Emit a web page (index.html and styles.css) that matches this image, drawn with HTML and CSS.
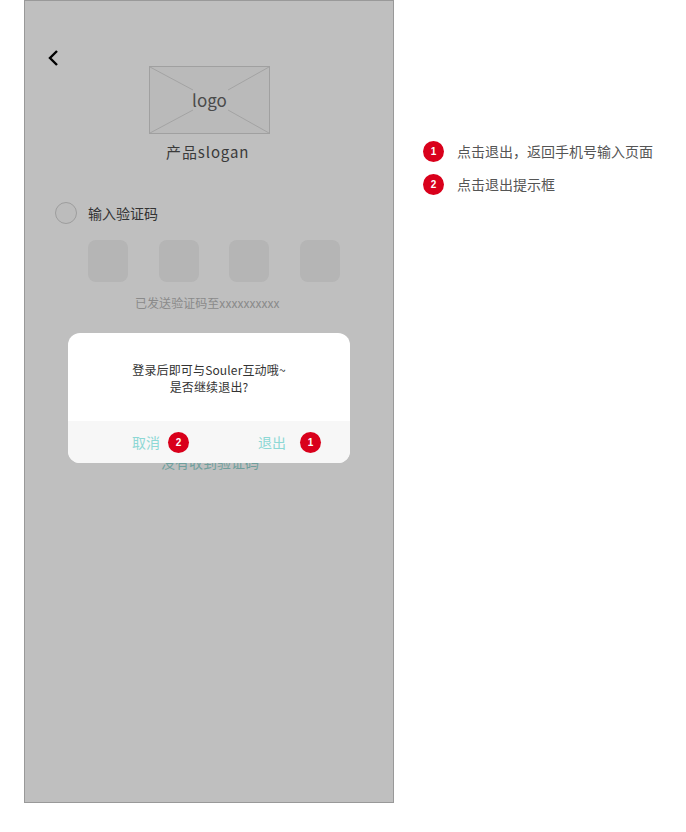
FILE: index.html
```html
<!DOCTYPE html>
<html lang="zh">
<head>
<meta charset="utf-8">
<title>退出提示</title>
<link rel="stylesheet" href="styles.css">
</head>
<body>
<div class="page">
  <main class="phone">
    <svg class="back" width="12" height="18" viewBox="0 0 12 18"><path d="M10 2 L3 9 L10 16" fill="none" stroke="#000" stroke-width="2.4"/></svg>
    <div class="logo">
      <svg class="logo-lines" width="119" height="66" viewBox="0 0 119 66"><path d="M0 0 L43 23 M119 0 L78 23 M0 66 L43 43 M119 66 L78 43" stroke="#a3a3a3" stroke-width="1" fill="none"/></svg>
      <span class="logo-text">logo</span>
    </div>
    <div class="slogan">产品slogan</div>
    <div class="code-title">
      <span class="radio"></span>
      <span>输入验证码</span>
    </div>
    <div class="code-boxes">
      <span class="code-box"></span>
      <span class="code-box"></span>
      <span class="code-box"></span>
      <span class="code-box"></span>
    </div>
    <div class="sent">已发送验证码至xxxxxxxxxx</div>
    <div class="resend">没有收到验证码</div>
    <section class="dialog">
      <div class="dialog-text">登录后即可与Souler互动哦~<br>是否继续退出?</div>
      <div class="dialog-actions">
        <div class="action action-cancel"><span>取消</span><span class="badge">2</span></div>
        <div class="action action-exit"><span>退出</span><span class="badge">1</span></div>
      </div>
    </section>
  </main>
  <aside class="notes">
    <div class="note"><span class="badge">1</span><span>点击退出，返回手机号输入页面</span></div>
    <div class="note"><span class="badge">2</span><span>点击退出提示框</span></div>
  </aside>
</div>
</body>
</html>
```
FILE: styles.css
```css
* { box-sizing: border-box; }
html, body { margin: 0; padding: 0; background: #fff; }
body {
  font-family: "Noto Sans CJK SC", "Open Sans", "Noto Sans", sans-serif;
  color: #3a3a3a;
  height: 832px;
  overflow: hidden;
}
.page {
  display: flex;
  align-items: flex-start;
  padding-left: 24px;
}
.phone {
  position: relative;
  width: 370px;
  height: 803px;
  background: #bfbfbf;
  border: 1px solid #999;
  padding-top: 48px;
  flex: none;
}
.back { display: block; margin-left: 22px; }
.logo {
  position: relative;
  width: 121px;
  height: 68px;
  margin-top: -1px;
  margin-left: 124px;
  background: #bababa;
  border: 1px solid #a0a0a0;
  display: flex;
  align-items: center;
  justify-content: center;
}
.logo-lines { position: absolute; left: 0; top: 0; }
.logo-text { position: relative; font-size: 17px; line-height: 20px; color: #4a4a4a; }
.slogan {
  margin-top: 7px;
  margin-left: 141px;
  font-size: 15px;
  line-height: 22px;
  letter-spacing: 0.9px;
  color: #3a3a3a;
}
.code-title {
  display: flex;
  align-items: center;
  gap: 11px;
  margin-top: 39px;
  margin-left: 30px;
  font-size: 14px;
  line-height: 22px;
  color: #333;
}
.radio {
  width: 22px;
  height: 22px;
  border: 1px solid #9d9d9d;
  border-radius: 50%;
  background: #bcbcbc;
}
.code-boxes {
  display: flex;
  gap: 30.67px;
  margin-top: 16px;
  margin-left: 63px;
}
.code-box {
  width: 40px;
  height: 42px;
  border-radius: 8px;
  background: #b5b5b5;
}
.sent {
  margin-top: 12px;
  margin-left: 110px;
  font-size: 12px;
  line-height: 18px;
  letter-spacing: 0.05px;
  color: #8a8a8a;
}
.resend {
  margin-top: 140px;
  margin-left: 136px;
  font-size: 14px;
  line-height: 20px;
  color: #6f9f9d;
}
.dialog {
  position: absolute;
  left: 43px;
  top: 332px;
  width: 282px;
  height: 130px;
  border-radius: 12px;
  background: #fff;
  overflow: hidden;
  display: flex;
  flex-direction: column;
}
.dialog-text {
  flex: 1;
  padding-top: 28px;
  font-size: 12px;
  line-height: 17px;
  letter-spacing: 0.15px;
  text-align: center;
  color: #333;
}
.dialog-actions {
  height: 42px;
  background: #f7f7f7;
  display: flex;
  align-items: center;
  color: #8dd8d5;
  font-size: 14px;
}
.action { display: flex; align-items: center; gap: 8px; }
.action-cancel { margin-left: 64px; }
.action-exit { margin-left: 69px; gap: 14px; }
.badge {
  width: 21px;
  height: 21px;
  border-radius: 50%;
  background: #d9001b;
  color: #fff;
  font-family: "Liberation Sans", sans-serif;
  font-size: 10px;
  font-weight: 700;
  line-height: 21px;
  text-align: center;
  flex: none;
}
.notes {
  display: flex;
  flex-direction: column;
  gap: 11px;
  margin-left: 29px;
  padding-top: 140px;
  font-size: 14px;
  line-height: 22px;
  color: #555;
}
.note { display: flex; align-items: center; gap: 13px; white-space: nowrap; }
```
